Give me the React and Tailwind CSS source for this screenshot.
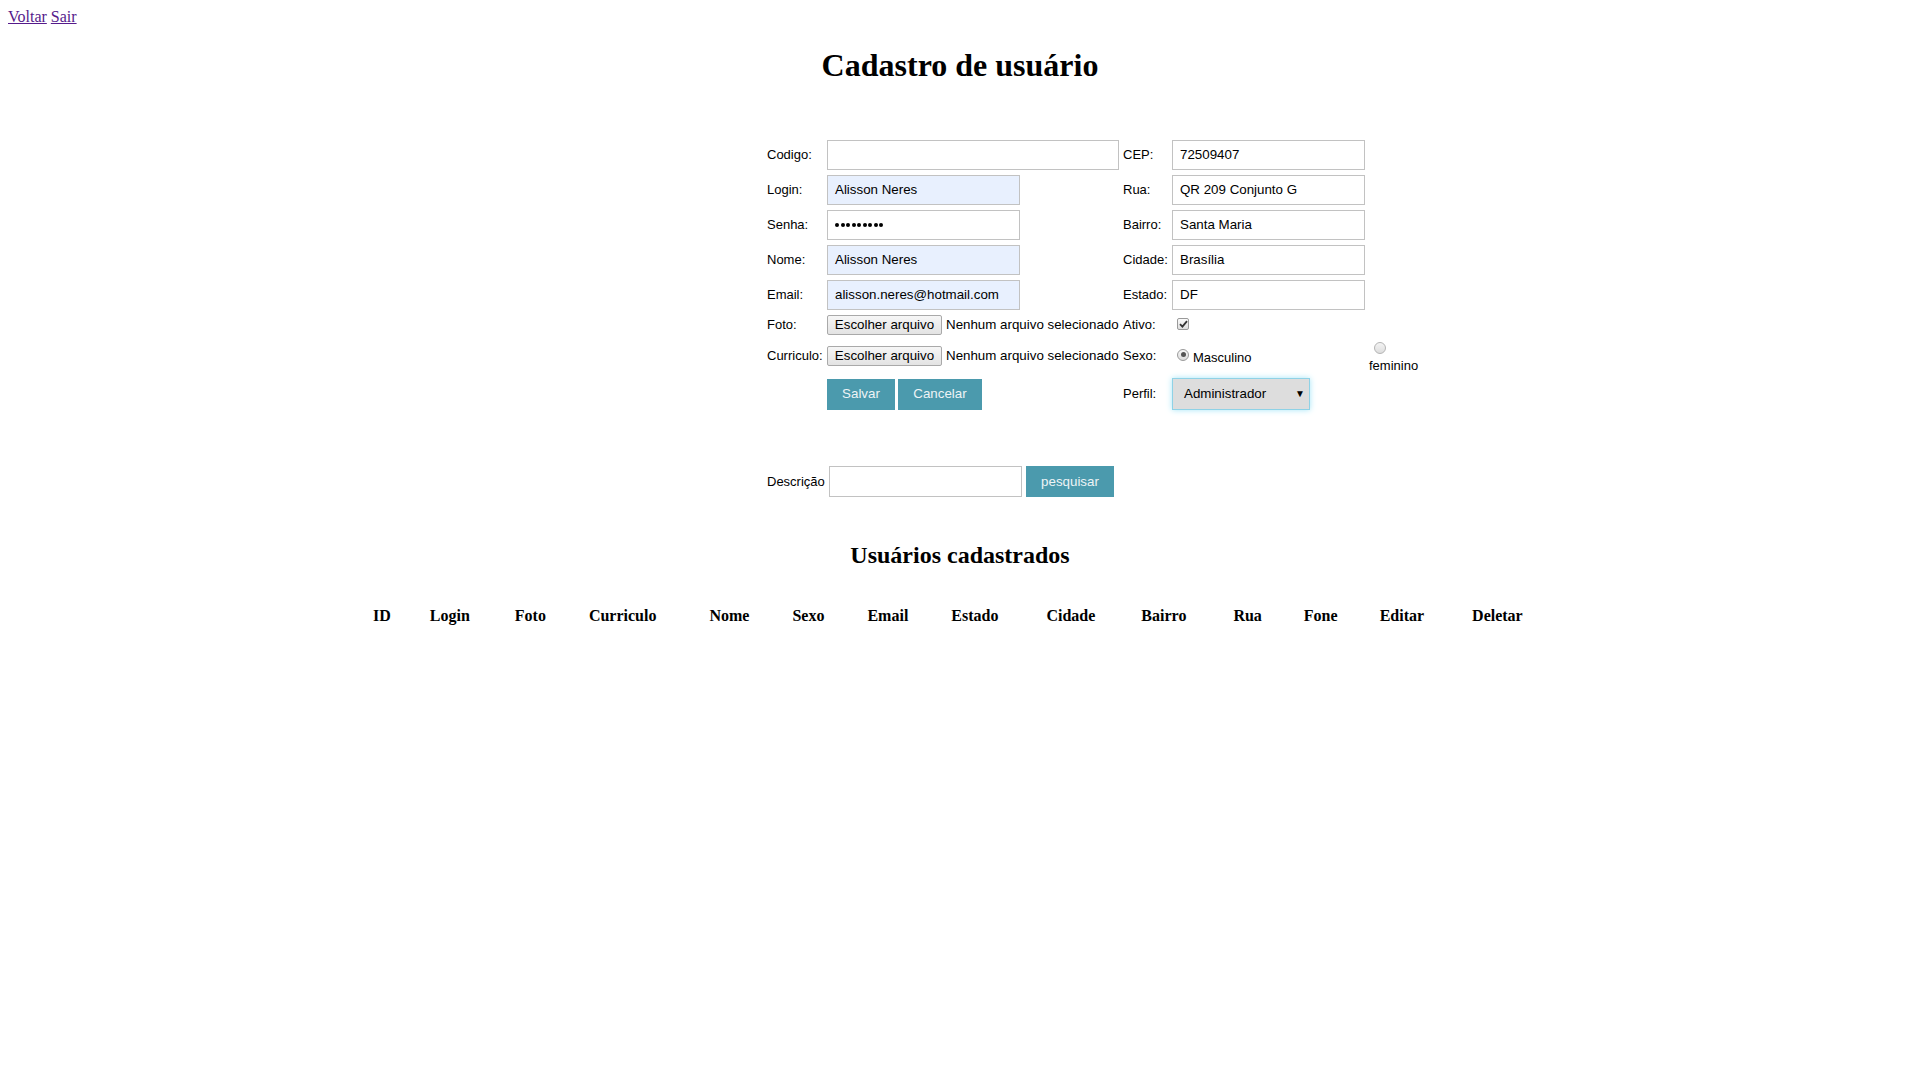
import React from "react";

const sans = { fontFamily: '"Liberation Sans", Arial, sans-serif' };
const serif = { fontFamily: '"Liberation Serif", "Times New Roman", serif' };

function TextInput({ value, w = "w-[193px]", filled = false }) {
  return (
    <div
      className={`${w} h-[30px] border border-[#c2c2c2] ${filled ? "bg-[#e8f0fe]" : "bg-white"} pl-[7px] flex items-center text-[13.333px] text-black whitespace-nowrap`}
    >
      {value}
    </div>
  );
}

function FileInput() {
  return (
    <div className="flex items-center">
      <div className="w-[115px] h-[20px] border border-[#a9a9a9] rounded-[2px] bg-gradient-to-b from-[#f6f6f6] to-[#e3e3e3] flex items-center justify-center text-[13.333px] text-black whitespace-nowrap">
        Escolher arquivo
      </div>
      <span className="ml-[4px] text-[13.333px] text-black whitespace-nowrap">Nenhum arquivo selecionado</span>
    </div>
  );
}

function Row({ h, children, className = "items-center" }) {
  return <div className={`flex ${className}`} style={{ height: h }}>{children}</div>;
}

const C1 = ({ children }) => <div className="w-[60px] shrink-0 text-[13px] text-black whitespace-nowrap">{children}</div>;
const C2 = ({ children }) => <div className="w-[296px] shrink-0">{children}</div>;
const C3 = ({ children }) => <div className="w-[49px] shrink-0 text-[13px] text-black whitespace-nowrap">{children}</div>;
const C4 = ({ children }) => <div className="w-[197px] shrink-0">{children}</div>;

const cols = [
  ["ID", "ml-[373px]"], ["Login", "ml-[39px]"], ["Foto", "ml-[45px]"], ["Curriculo", "ml-[43px]"],
  ["Nome", "ml-[53px]"], ["Sexo", "ml-[43px]"], ["Email", "ml-[43px]"], ["Estado", "ml-[43px]"],
  ["Cidade", "ml-[48px]"], ["Bairro", "ml-[46px]"], ["Rua", "ml-[47px]"], ["Fone", "ml-[42px]"],
  ["Editar", "ml-[42px]"], ["Deletar", "ml-[48px]"],
];

function Dots() {
  return (
    <div className="flex gap-[1.5px]">
      {Array.from({ length: 9 }).map((_, i) => (
        <span key={i} className="block w-[4px] h-[4px] rounded-full bg-black" />
      ))}
    </div>
  );
}

export default function App() {
  return (
    <div className="min-h-screen bg-white text-black" style={serif}>
      <div className="pt-[8px] pl-[8px] text-[16px] leading-[18px]">
        <a href="#" className="text-[#551a8b] underline">Voltar</a>{" "}
        <a href="#" className="text-[#551a8b] underline">Sair</a>
      </div>

      <h1 className="mt-[21px] text-[32px] leading-[37px] font-bold text-center">Cadastro de usuário</h1>

      <div className="mt-[53px] ml-[767px]" style={sans}>
        <Row h={35}>
          <C1>Codigo:</C1>
          <C2><TextInput w="w-[292px]" value="" /></C2>
          <C3>CEP:</C3>
          <C4><TextInput value="72509407" /></C4>
        </Row>
        <Row h={35}>
          <C1>Login:</C1>
          <C2><TextInput value="Alisson Neres" filled /></C2>
          <C3>Rua:</C3>
          <C4><TextInput value="QR 209 Conjunto G" /></C4>
        </Row>
        <Row h={35}>
          <C1>Senha:</C1>
          <C2><TextInput value={<Dots />} /></C2>
          <C3>Bairro:</C3>
          <C4><TextInput value="Santa Maria" /></C4>
        </Row>
        <Row h={35}>
          <C1>Nome:</C1>
          <C2><TextInput value="Alisson Neres" filled /></C2>
          <C3>Cidade:</C3>
          <C4><TextInput value="Brasília" /></C4>
        </Row>
        <Row h={35}>
          <C1>Email:</C1>
          <C2><TextInput value="alisson.neres@hotmail.com" filled /></C2>
          <C3>Estado:</C3>
          <C4><TextInput value="DF" /></C4>
        </Row>
        <Row h={25}>
          <C1>Foto:</C1>
          <C2><FileInput /></C2>
          <C3>Ativo:</C3>
          <C4>
            <div className="ml-[5px] -mt-[1px] w-[12px] h-[12px] border border-[#9a9a9a] rounded-[2px] bg-gradient-to-b from-[#fbfbfb] to-[#dedede] flex items-center justify-center">
              <svg width="9" height="8" viewBox="0 0 9 8">
                <path d="M1 4.2 L3.4 6.6 L8 1.2" fill="none" stroke="#333" strokeWidth="1.8" />
              </svg>
            </div>
          </C4>
        </Row>
        <Row h={37}>
          <C1>Curriculo:</C1>
          <C2><FileInput /></C2>
          <C3>Sexo:</C3>
          <C4>
            <div className="flex items-center">
              <div className="ml-[5px] -mt-[2px] w-[12px] h-[12px] rounded-full border border-[#9a9a9a] bg-gradient-to-b from-[#f8f8f8] to-[#dcdcdc] flex items-center justify-center">
                <div className="w-[5px] h-[5px] rounded-full bg-[#555]" />
              </div>
              <span className="ml-[4px] mt-[5px] text-[13px]">Masculino</span>
            </div>
          </C4>
          <div className="self-start pt-[5px]">
            <div className="ml-[5px] w-[12px] h-[12px] rounded-full border border-[#b4b4b4] bg-gradient-to-b from-[#f4f4f4] to-[#dddddd]" />
            <div className="mt-[4px] text-[13px] leading-[16px]">feminino</div>
          </div>
        </Row>
        <Row h={40}>
          <C1></C1>
          <C2>
            <div className="flex gap-[3px]">
              <div className="w-[68px] h-[31px] bg-[#4b9aad] text-[#eef4f6] text-[13.333px] flex items-center justify-center">Salvar</div>
              <div className="w-[84px] h-[31px] bg-[#4b9aad] text-[#eef4f6] text-[13.333px] flex items-center justify-center">Cancelar</div>
            </div>
          </C2>
          <C3>Perfil:</C3>
          <C4>
            <div className="w-[138px] h-[32px] bg-[#dddddd] border border-[#8fd2e6] shadow-[0_0_6px_#a6e6f7] flex items-center justify-between pl-[11px] pr-[4px] text-[13.333px] text-black">
              <span>Administrador</span>
              <span className="text-[10px] leading-none">▼</span>
            </div>
          </C4>
        </Row>

        <div className="mt-[52px] flex items-center h-[31px]">
          <span className="text-[13px] w-[62px] shrink-0">Descrição</span>
          <div className="w-[193px] h-[31px] border border-[#c2c2c2] bg-white" />
          <div className="ml-[4px] w-[88px] h-[31px] bg-[#4b9aad] text-[#eef4f6] text-[13.333px] flex items-center justify-center">pesquisar</div>
        </div>
      </div>

      <h2 className="mt-[44px] text-[24px] leading-[28px] font-bold text-center">Usuários cadastrados</h2>

      <div className="mt-[38px] flex text-[16px] leading-[18px] font-bold">
        {cols.map(([t, m]) => (
          <div key={t} className={`shrink-0 ${m}`}>{t}</div>
        ))}
      </div>
    </div>
  );
}
